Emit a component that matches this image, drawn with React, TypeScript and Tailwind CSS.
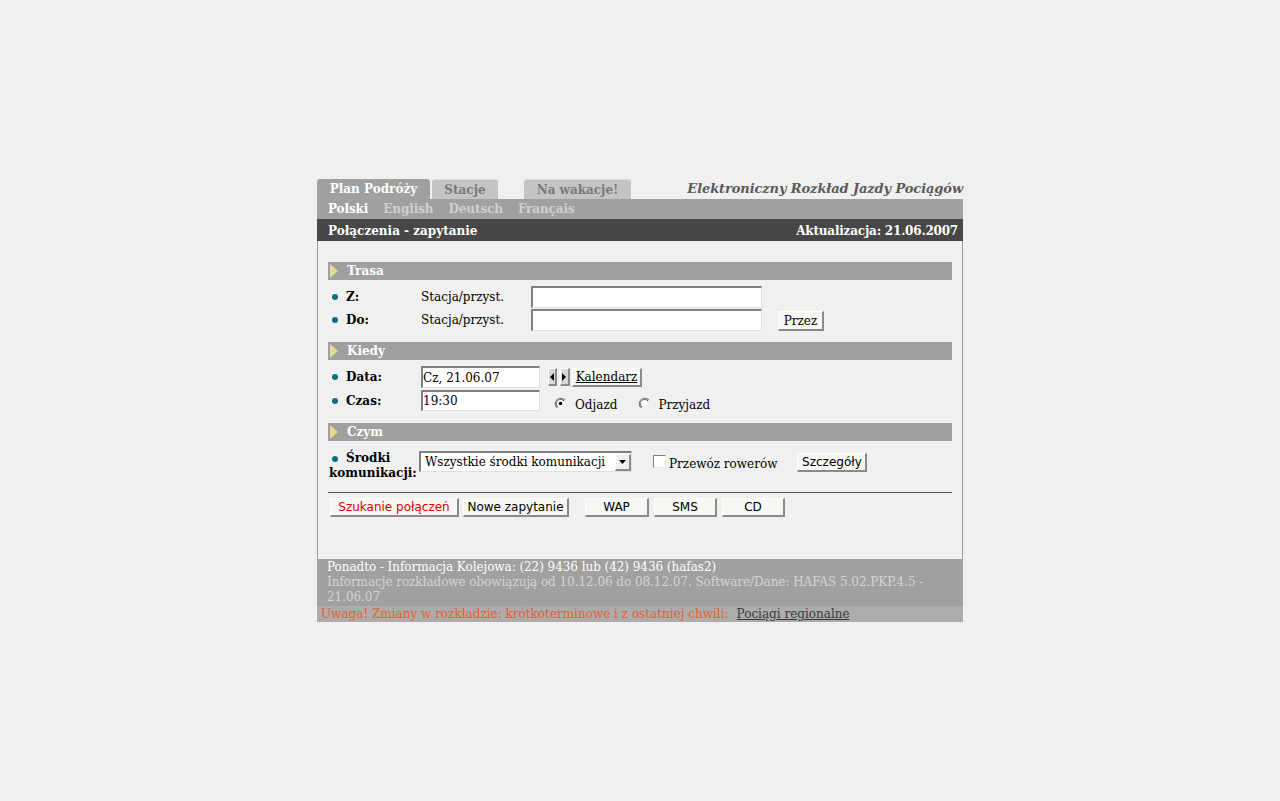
import React from "react";

const serif = "font-['DejaVu_Serif',serif]";
const sans = "font-['DejaVu_Sans',sans-serif]";

function Bullet() {
  return <span className="inline-block w-[6px] h-[6px] rounded-full bg-[#0a7080]" />;
}

function SectionHeader({ title }: { title: string }) {
  return (
    <div className="flex items-center h-[18px] bg-[#a0a0a0]">
      <svg width="10" height="18" viewBox="0 0 10 18" className="ml-[2px]">
        <polygon points="0,2 8,9 0,16" fill="#e2dc8c" />
      </svg>
      <span className="ml-[7px] text-[12px] font-bold text-white leading-none">{title}</span>
    </div>
  );
}

function Btn({ children, className = "" }: { children: React.ReactNode; className?: string }) {
  return (
    <div
      className={`flex items-center justify-center bg-[#f6f6f2] border-t border-l border-t-[#ffffff] border-l-[#ffffff] border-r-2 border-b-2 border-r-[#8a8a8a] border-b-[#8a8a8a] ${className}`}
    >
      {children}
    </div>
  );
}

function TextInput({ w, h = 22, value = "" }: { w: number; h?: number; value?: string }) {
  return (
    <div
      className="bg-white border-t-2 border-l-2 border-t-[#808080] border-l-[#808080] border-r border-b border-r-[#e0e0e0] border-b-[#e0e0e0] flex items-center pl-[0px] text-[12px] text-black whitespace-nowrap overflow-hidden"
      style={{ width: w, height: h }}
    >
      {value}
    </div>
  );
}

function Radio({ checked }: { checked?: boolean }) {
  return (
    <svg width="13" height="13" viewBox="0 0 13 13">
      <path d="M11 3 A5.5 5.5 0 1 0 3 11" fill="none" stroke="#808080" strokeWidth="1.3" />
      <path d="M10 4 A4 4 0 1 0 4 10" fill="none" stroke="#404040" strokeWidth="1" />
      <circle cx="6.5" cy="6.5" r="3.6" fill="#fff" />
      {checked && <circle cx="6.5" cy="6.5" r="1.8" fill="#000" />}
    </svg>
  );
}

export default function App() {
  return (
    <div className={`min-h-[801px] bg-[#f0f0f0] ${serif} text-black`}>
      <div className="w-[646px] mx-auto pt-[179px]">
        {/* Tabs */}
        <div className="flex items-end h-[20px]">
          <div className="w-[113px] h-[20px] bg-[#a0a0a0] rounded-t-[3px] flex items-center justify-center text-[12px] font-bold text-white">
            Plan Podróży
          </div>
          <div className="ml-[2px] w-[66px] h-[20px] bg-[#c4c4c4] border-t border-[#dcdcdc] rounded-t-[3px] flex items-center justify-center text-[12px] font-bold text-[#7a7a7a]">
            Stacje
          </div>
          <div className="ml-[26px] w-[107px] h-[20px] bg-[#c4c4c4] border-t border-[#dcdcdc] rounded-t-[3px] flex items-center justify-center text-[12px] font-bold text-[#7a7a7a]">
            Na wakacje!
          </div>
          <div className="flex-1 h-[20px] flex items-center justify-end text-[13px] font-bold italic text-[#5a5a5a] tracking-[-0.1px]">
            Elektroniczny Rozkład Jazdy Pociągów
          </div>
        </div>
        {/* Language bar */}
        <div className="h-[20px] bg-[#a0a0a0] flex items-center pl-[11px] gap-[15px] text-[12px] font-bold tracking-[-0.1px]">
          <span className="text-white">Polski</span>
          <span className="text-[#cfcfcf]">English</span>
          <span className="text-[#cfcfcf]">Deutsch</span>
          <span className="text-[#cfcfcf]">Français</span>
        </div>
        {/* Dark bar */}
        <div className="h-[22px] bg-[#474747] flex items-center justify-between pl-[11px] pr-[5px] text-[12px] font-bold text-white pt-[1px]">
          <span>Połączenia - zapytanie</span>
          <span className="tracking-[-0.2px]">Aktualizacja: 21.06.2007</span>
        </div>
        {/* Main box */}
        <div className="border-l border-r border-[#9a9a9a] h-[318px] pl-[10px] pr-[10px] pt-[21px]">
          <SectionHeader title="Trasa" />
          <div className="mt-[6px] flex flex-col gap-[1px]">
            <div className="flex items-center h-[22px]">
              <div className="w-[18px] flex items-center pl-[4px]"><Bullet /></div>
              <div className="w-[75px] text-[12px] font-bold">Z:</div>
              <div className="w-[110px] text-[12px]">Stacja/przyst.</div>
              <TextInput w={231} />
            </div>
            <div className="flex items-center h-[22px]">
              <div className="w-[18px] flex items-center pl-[4px]"><Bullet /></div>
              <div className="w-[75px] text-[12px] font-bold">Do:</div>
              <div className="w-[110px] text-[12px]">Stacja/przyst.</div>
              <TextInput w={231} />
              <Btn className="ml-[16px] w-[46px] h-[20px] mt-[2px] text-[12px]">Przez</Btn>
            </div>
          </div>

          <div className="mt-[11px]">
            <SectionHeader title="Kiedy" />
          </div>
          <div className="mt-[6px] flex flex-col gap-[2px]">
            <div className="flex items-center h-[22px]">
              <div className="w-[18px] flex items-center pl-[4px]"><Bullet /></div>
              <div className="w-[75px] text-[12px] font-bold">Data:</div>
              <TextInput w={119} value="Cz, 21.06.07" />
              <div className="ml-[8px] flex items-center gap-[3px]">
                <Btn className="w-[9px] h-[18px] !bg-[#d8d8d8]">
                  <svg width="5" height="8" viewBox="0 0 5 8"><polygon points="4,0 0,4 4,8" fill="#000" /></svg>
                </Btn>
                <Btn className="w-[10px] h-[18px] !bg-[#d8d8d8]">
                  <svg width="5" height="8" viewBox="0 0 5 8"><polygon points="0,0 4,4 0,8" fill="#000" /></svg>
                </Btn>
              </div>
              <Btn className="ml-[2px] w-[70px] h-[19px] text-[12px] underline">Kalendarz</Btn>
            </div>
            <div className="flex items-center h-[21px]">
              <div className="w-[18px] flex items-center pl-[4px]"><Bullet /></div>
              <div className="w-[75px] text-[12px] font-bold">Czas:</div>
              <TextInput w={119} h={21} value="19:30" />
              <div className="ml-[14px] flex items-center gap-[8px] text-[12px] mt-[6px]">
                <Radio checked />
                <span className="mt-[3px]">Odjazd</span>
              </div>
              <div className="ml-[21px] flex items-center gap-[7px] text-[12px] mt-[6px]">
                <Radio />
                <span className="mt-[3px]">Przyjazd</span>
              </div>
            </div>
          </div>

          <div className="mt-[12px]">
            <SectionHeader title="Czym" />
          </div>
          <div className="mt-[6px] flex items-start">
            <div className="w-[91px] text-[12px] font-bold leading-[15px] pt-[4px]">
              <div className="flex items-center">
                <span className="ml-[4px] mr-[8px]"><Bullet /></span>
                <span>Środki</span>
              </div>
              <div className="ml-[1px]">komunikacji:</div>
            </div>
            <div className="mt-[4px] w-[213px] h-[21px] bg-white border-t-2 border-l-2 border-t-[#808080] border-l-[#808080] border-r border-b border-r-[#e0e0e0] border-b-[#e0e0e0] flex items-center">
              <span className="flex-1 pl-[4px] text-[12px] whitespace-nowrap overflow-hidden">Wszystkie środki komunikacji</span>
              <Btn className="w-[16px] h-[17px] !bg-[#f0f0f0]">
                <svg width="7" height="4" viewBox="0 0 7 4"><polygon points="0,0 7,0 3.5,4" fill="#000" /></svg>
              </Btn>
            </div>
            <div className="ml-[21px] mt-[4px] flex items-center h-[21px]">
              <div className="w-[13px] h-[13px] bg-white border-t border-l border-t-[#808080] border-l-[#808080] border-r border-b border-r-[#e8e8e8] border-b-[#e8e8e8]" />
              <span className="ml-[3px] text-[12px] mt-[4px]">Przewóz rowerów</span>
            </div>
            <Btn className={`ml-[20px] mt-[6px] w-[70px] h-[19px] text-[12px] ${sans}`}>Szczegóły</Btn>
          </div>

          <div className="mt-[11px] border-t border-[#555555]" />
          <div className={`mt-[5px] flex items-center text-[12px] ${sans} pl-[2px]`}>
            <Btn className="w-[129px] h-[19px] text-[#e00000]">Szukanie połączeń</Btn>
            <Btn className="ml-[4px] w-[106px] h-[19px]">Nowe zapytanie</Btn>
            <Btn className="ml-[16px] w-[64px] h-[19px]">WAP</Btn>
            <Btn className="ml-[5px] w-[63px] h-[19px]">SMS</Btn>
            <Btn className="ml-[5px] w-[63px] h-[19px]">CD</Btn>
          </div>
        </div>
        {/* Footer */}
        <div className="bg-[#a0a0a0] h-[47px] pl-[10px] pr-[10px] pt-[1px] text-[12px] leading-[15px] tracking-[-0.05px]">
          <div className="text-white">Ponadto - Informacja Kolejowa: (22) 9436 lub (42) 9436 (hafas2)</div>
          <div className="text-[#d4d4d4]">
            Informacje rozkładowe obowiązują od 10.12.06 do 08.12.07. Software/Dane: HAFAS 5.02.PKP.4.5 - 21.06.07
          </div>
        </div>
        <div className="bg-[#acacac] h-[16px] pl-[4px] flex items-center text-[12px] whitespace-nowrap">
          <span className="text-[#e8602c]">Uwaga! Zmiany w rozkładzie: krótkoterminowe i z ostatniej chwili:</span>
          <span className="ml-[8px] text-[#3a3a3a] underline">Pociągi regionalne</span>
        </div>
      </div>
    </div>
  );
}
